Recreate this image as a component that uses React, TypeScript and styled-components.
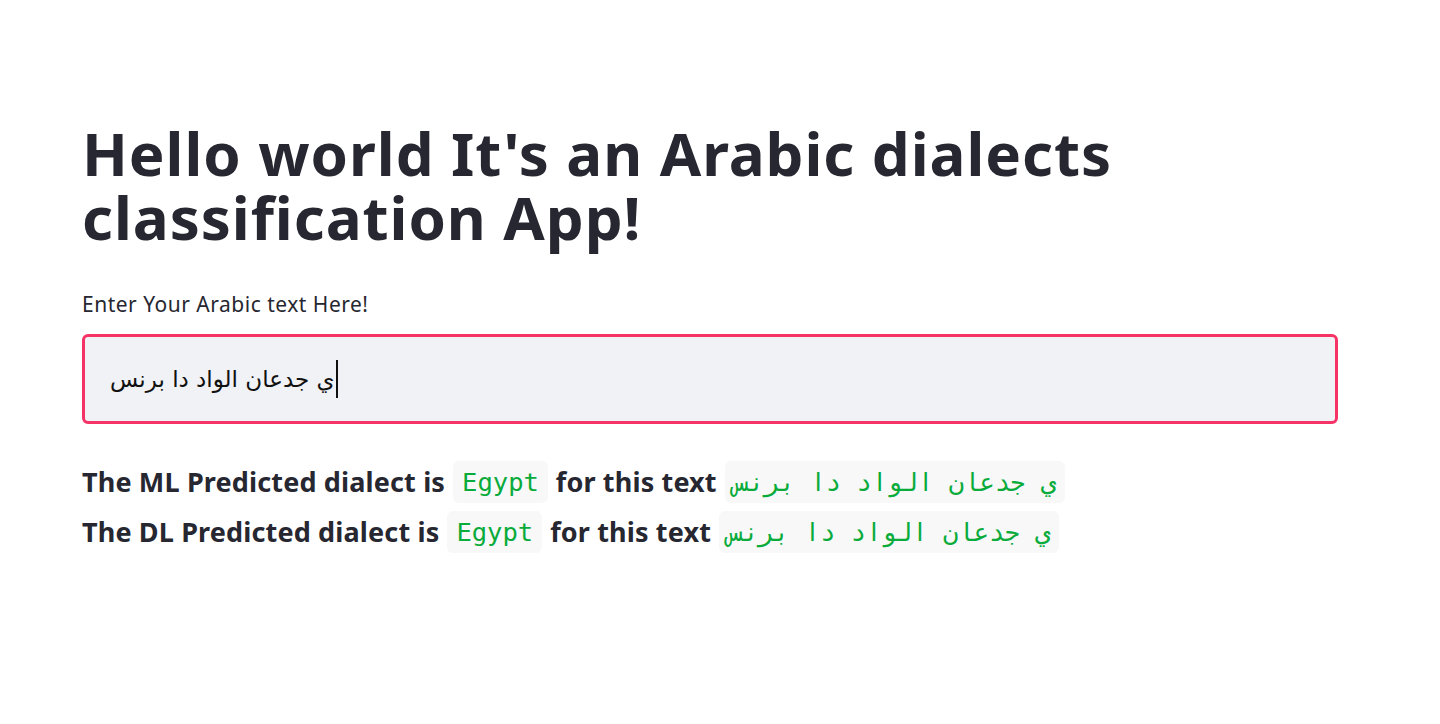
import React from "react";
import styled, { createGlobalStyle } from "styled-components";

const Global = createGlobalStyle`
  html, body { margin: 0; padding: 0; background: #ffffff; }
  body { font-family: "Noto Sans", "Liberation Sans", sans-serif; color: #262730; }
`;

const Main = styled.main`
  padding: 121px 102px 0 82px;
  display: flex;
  flex-direction: column;
`;

const Title = styled.h1`
  margin: 0;
  font-family: "Noto Sans", "Liberation Sans", sans-serif;
  font-weight: 700;
  font-size: 60px;
  line-height: 64px;
  letter-spacing: 0.95px;
  color: #262730;
  max-width: 1120px;
`;

const Field = styled.div`
  margin-top: 43px;
  display: flex;
  flex-direction: column;
  gap: 17px;
`;

const Label = styled.label`
  font-family: "Noto Sans", "Liberation Sans", sans-serif;
  font-size: 21px;
  line-height: 25px;
  letter-spacing: 0.5px;
  color: #262730;
`;

const InputBox = styled.div`
  height: 90px;
  box-sizing: border-box;
  border: 3px solid #f63366;
  border-radius: 6px;
  background: #f0f2f6;
  display: flex;
  align-items: center;
  padding: 0 25px;
`;

const InputText = styled.span`
  font-family: "DejaVu Sans", "Noto Sans", sans-serif;
  font-size: 23px;
  color: #111111;
  direction: ltr;
  unicode-bidi: plaintext;
`;

const Caret = styled.span`
  display: inline-block;
  width: 2px;
  height: 38px;
  background: #111;
  margin-left: 1px;
`;

const Results = styled.div`
  margin-top: 37px;
  display: flex;
  flex-direction: column;
  gap: 8px;
`;

const Line = styled.p`
  margin: 0;
  display: flex;
  align-items: center;
  gap: 8px;
  font-family: "Noto Sans", "Liberation Sans", sans-serif;
  font-weight: 700;
  font-size: 27px;
  line-height: 42px;
  color: #262730;
  letter-spacing: 0.15px;
`;

const Code = styled.code`
  font-family: "DejaVu Sans Mono", "Liberation Mono", monospace;
  font-weight: 400;
  font-size: 25.5px;
  color: #09ab3b;
  background: #f8f8f8;
  border-radius: 6px;
  padding: 0 9px;
  line-height: 42px;
  letter-spacing: 0;
`;

const arabic = "ي جدعان الواد دا برنس";

export default function App() {
  return (
    <>
      <Global />
      <Main>
        <Title>Hello world It's an Arabic dialects classification App!</Title>
        <Field>
          <Label>Enter Your Arabic text Here!</Label>
          <InputBox>
            <InputText>{arabic}</InputText>
            <Caret />
          </InputBox>
        </Field>
        <Results>
          <Line>
            The ML Predicted dialect is <Code>Egypt</Code> for this text <Code dir="rtl">{arabic}</Code>
          </Line>
          <Line>
            The DL Predicted dialect is <Code>Egypt</Code> for this text <Code dir="rtl">{arabic}</Code>
          </Line>
        </Results>
      </Main>
    </>
  );
}
